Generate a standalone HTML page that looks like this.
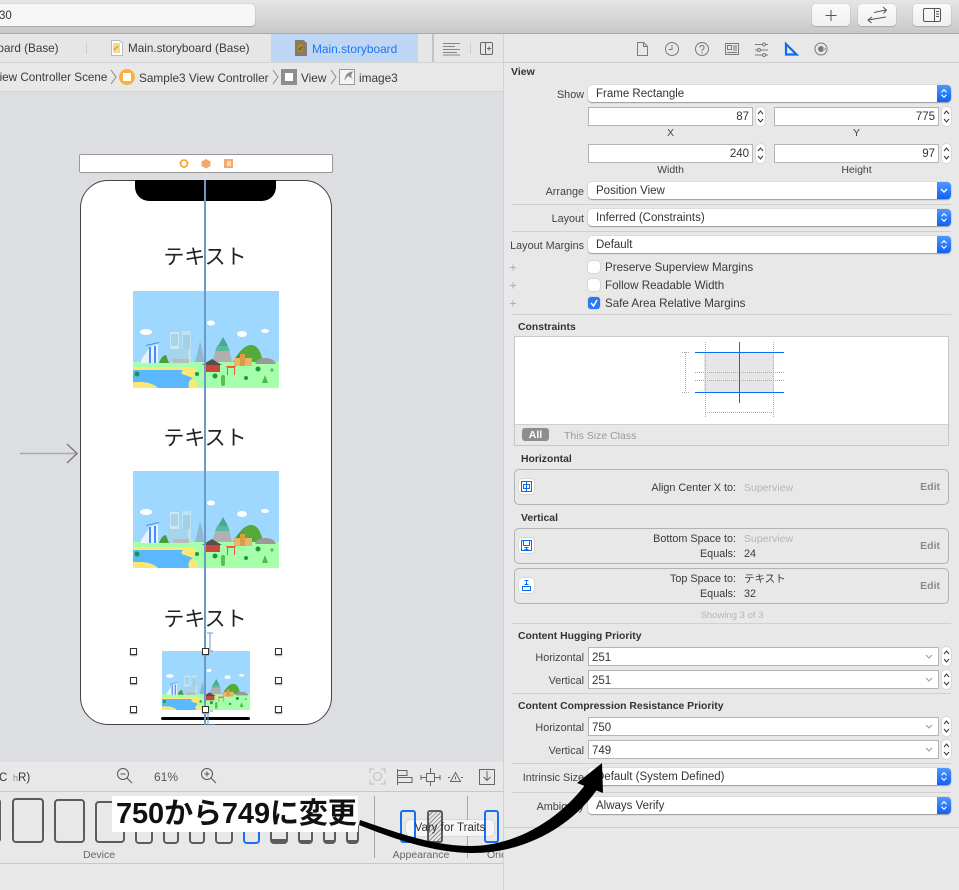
<!DOCTYPE html>
<html><head><meta charset="utf-8">
<style>
html,body{margin:0;padding:0;width:959px;height:890px;overflow:hidden;background:#e8e8e8}
body{position:relative;font-family:"Liberation Sans","Noto Sans CJK JP",sans-serif;font-size:11px;color:#3a3a3a}
.a{position:absolute}
.t{position:absolute;height:14px;line-height:16px;white-space:nowrap}
.r{text-align:right}
.c{text-align:center}
.b{font-weight:bold}
.l{position:absolute;height:1px;background:#d0d0d0;left:512px;width:439px}
.lab{position:absolute;left:484px;width:100px;text-align:right;height:14px;line-height:16px;font-size:10.8px;color:#444;white-space:nowrap}
.pop{position:absolute;left:588px;width:363px;background:#fff;border-radius:4px;box-shadow:0 1px 1px #999,0 0 1px #999;height:17px;line-height:19px;font-size:11.5px;color:#333;text-indent:8px}
.pop i{position:absolute;right:0;top:0;width:14px;height:17px;border-radius:0 4px 4px 0;background:linear-gradient(#4f97ff,#0f62f0)}
.pop svg{position:absolute;right:2px;top:3px}
.fld{position:absolute;background:#fff;border:1px solid #b4b4b4;box-sizing:border-box;height:19px;line-height:19px;font-size:11.5px;color:#333;text-align:right;padding-right:3px}
.st{position:absolute;width:9px;height:19px;background:#fff;border-radius:4px;box-shadow:0 0 1px #888}
.pf{position:absolute;left:588px;width:351px;height:19px;background:#fff;border:1px solid #b4b4b4;box-sizing:border-box;line-height:20px;font-size:11.5px;color:#333;padding-left:3px}
.pf svg{position:absolute;right:5px;top:6px}
.cb{position:absolute;left:588px;width:12px;height:12px;background:#fff;border-radius:3px;box-shadow:0 0 1px #777;}
.box{position:absolute;left:514px;width:435px;border:1px solid #b2b2b2;box-sizing:border-box;border-radius:5px;background:#e8e8e8}
.ed{position:absolute;left:910px;width:30px;text-align:right;height:14px;line-height:16px;font-weight:bold;font-size:10.5px;color:#8a8a8a}
.ic{position:absolute;left:519px;width:15px;height:15px;background:#fff;border-radius:3px;box-shadow:0 0 1px #777}
.btn{position:absolute;top:4px;height:22px;background:linear-gradient(#fafafa,#f0f0f0);border-radius:4px;box-shadow:0 1px 1px #aaa,0 0 1px #aaa}
.h{position:absolute;width:5px;height:5px;background:#fff;border:1px solid #333;box-shadow:0 1px 1px #999}
.jp{position:absolute;left:80px;width:252px;text-align:center;font-size:21px;height:32px;line-height:32px;color:#222}
.dev{position:absolute;border:2.5px solid #5c5c5c;box-sizing:border-box;border-radius:4px}
.dv2{position:absolute;top:825px;height:19px;border:2px solid #5c5c5c;border-radius:0 0 4px 4px;box-sizing:border-box;border-top:0}
</style></head><body>
<svg width="0" height="0" style="position:absolute">
<defs>
<symbol id="city" viewBox="0 0 146 97" preserveAspectRatio="none">
<rect width="146" height="97" fill="#9fd8ff"/>
<rect y="71" width="146" height="26" fill="#a6ffaa"/>
<path d="M0 76H58q8 2 4 8t-2 5q6 1 5 8H0Z" fill="#fbe774"/>
<path d="M0 79H50q-4 4 2 5l8 3q-6 3-4 10H25q-5-5-15-6H0Z" fill="#5ab8ff"/>
<ellipse cx="13" cy="41" rx="6" ry="3" fill="#fff"/><ellipse cx="78" cy="32" rx="4" ry="2.500" fill="#fff"/><ellipse cx="109" cy="43" rx="5" ry="3" fill="#fff"/><ellipse cx="132" cy="40" rx="4" ry="2" fill="#fff"/>
<path d="M8 69l9-13 8-3v19H8Z" fill="#e8f2ff"/><path d="M16 56h2v16h-2zM21 55h2v17h-2z" fill="#4a8cf0"/><path d="M13 54l13-3v1l-13 3z" fill="#4a8cf0"/>
<rect x="37" y="41" width="9" height="31" fill="#cfe6f3"/><rect x="49" y="40" width="9" height="31" fill="#bfe3ee"/><rect x="38" y="43" width="7" height="12" fill="#a6d4ea"/><rect x="50" y="44" width="7" height="14" fill="#9fd2e6"/>
<rect x="35" y="58" width="20" height="14" fill="#a6d4ea"/><rect x="40" y="68" width="16" height="4" fill="#bbb"/>
<path d="M26 72q3-8 7-8l3 8Z" fill="#4a9e3a"/>
<path d="M62 71q3-11 5-21q3 10 4 21Z" fill="#8fb8d0"/>
<path d="M79 71l5-16h11l4 16Z" fill="#b0b0b0"/><path d="M82 60h15l-3-6h-9Z" fill="#58b8a0"/><path d="M85 55l5-9 5 9Z" fill="#4aa890"/>
<path d="M100 71q10-18 19-17q8 1 11 17Z" fill="#55a83a"/><path d="M100 71q5-9 8-9l6 9Z" fill="#3e9a3a"/>
<rect x="101" y="67" width="18" height="8" fill="#e8b46a"/><rect x="107" y="63" width="5" height="12" fill="#d99d4a"/>
<path d="M122 73q2-6 10-6q9 0 11 6Z" fill="#9a9a9a"/>
<rect x="72" y="73" width="15" height="8" fill="#c8483a"/><path d="M69 74l10-6 10 6Z" fill="#55504e"/>
<path d="M93 75h10v1h-1v8h-1v-7h-6v7h-1v-8h-1Z" fill="#e8603a"/>
<circle cx="4" cy="83" r="2.500" fill="#1a9a3a"/><circle cx="64" cy="83" r="2" fill="#1a9a3a"/><circle cx="82" cy="85" r="2.500" fill="#1a9a3a"/><rect x="88" y="84" width="4" height="11" rx="2" fill="#5cc04a"/><circle cx="113" cy="87" r="2" fill="#1a9a3a"/><circle cx="125" cy="78" r="2.500" fill="#1a9a3a"/><path d="M129 92l3-8 3 8Z" fill="#4cb84a"/><circle cx="139" cy="79" r="1.600" fill="#5cc04a"/>
</symbol>
<symbol id="ud" viewBox="0 0 12 13"><path d="M3 5l3-3 3 3M3 8l3 3 3-3" fill="none" stroke="#fff" stroke-width="1.400"/></symbol>
<symbol id="udk" viewBox="0 0 9 19"><path d="M2 7l2.500-3 2.500 3M2 12l2.500 3 2.500-3" fill="none" stroke="#333" stroke-width="1"/></symbol>
<symbol id="chev" viewBox="0 0 8 5"><path d="M1 1l3 3 3-3" fill="none" stroke="#999" stroke-width="1"/></symbol>
</defs>
</svg>

<!-- toolbar -->
<div class="a" style="left:0;top:0;width:959px;height:33px;background:linear-gradient(#e6e6e6,#c8c8c8)"></div>
<div class="a" style="left:0;top:33px;width:959px;height:1px;background:#a9a9a9"></div>
<div class="a" style="left:-10px;top:4px;width:265px;height:22px;background:#f6f6f6;border-radius:4px;box-shadow:0 1px 1px #aaa,0 0 1px #aaa"></div>
<div class="t" style="left:-1px;top:8px;font-size:11.5px;color:#333">30</div>
<div class="btn" style="left:812px;width:38px"></div>
<div class="btn" style="left:858px;width:38px"></div>
<div class="btn" style="left:913px;width:38px"></div>
<svg class="a" style="left:812px;top:4px" width="139" height="22" fill="none" stroke="#555" stroke-width="1">
<path d="M19 6v11M13.500 11.500h11"/>
<path d="M62 8.500l12-2.500M71 3l3.500 3-3 3.500"/><path d="M74 13l-18 3M60 13l-4 3 3.500 3"/>
<rect x="111.500" y="4.500" width="17" height="13" rx="1.500"/><path d="M122.500 4.500v13M124 7.500h3M124 10h3M124 12.500h3"/>
</svg>

<!-- tabs -->
<div class="a" style="left:0;top:34px;width:503px;height:28px;background:#e6e6e6"></div>
<div class="a" style="left:271px;top:34px;width:147px;height:28px;background:#bfd7f5"></div>
<div class="a" style="left:86px;top:43px;width:1px;height:11px;background:#ccc"></div>
<div class="a" style="left:432px;top:34px;width:2px;height:28px;background:#c4c4c4"></div>
<div class="t" style="left:-9px;top:41px;font-size:11.7px;color:#3a3a3a">board (Base)</div>
<div class="t" style="left:128px;top:41px;font-size:11.7px;color:#3a3a3a">Main.storyboard (Base)</div>
<div class="t" style="left:312px;top:41px;font-size:11.9px;color:#1d76f2">Main.storyboard</div>
<svg class="a" style="left:111px;top:40px" width="12" height="16"><path d="M.5.500h8l3 3v12H.500Z" fill="#fff" stroke="#bbb"/><rect x="2" y="3" width="7" height="10" fill="#f7d98a"/><path d="M3 10l4-4" stroke="#d08a20"/></svg>
<svg class="a" style="left:295px;top:40px" width="12" height="16"><path d="M.5.500h8l3 3v12H.500Z" fill="#8d7a5c" stroke="#7a7a80"/><path d="M3 4h5v8H3z" fill="#a8843c"/><path d="M4 10l3-3" stroke="#5c4a22"/></svg>
<svg class="a" style="left:442px;top:41px" width="60" height="15" fill="none" stroke="#666" stroke-width="1">
<path d="M1 2.500h17M1 5.500h12M1 8.500h17M1 11.500h14M1 14h17" stroke-width=".8"/>
<path d="M28.500 2v11" stroke="#ccc"/>
<rect x="38.500" y="1.500" width="12" height="12" rx="1.500"/><path d="M43.500 1.500v12M45 7.500h4M47 5.500v4"/>
</svg>

<!-- breadcrumb -->
<div class="a" style="left:0;top:62px;width:503px;height:1px;background:#d4d4d4"></div>
<div class="a" style="left:0;top:63px;width:503px;height:28px;background:#e8e8e8"></div>
<div class="a" style="left:0;top:91px;width:503px;height:1px;background:#d4d4d4"></div>
<div class="t" style="left:-8px;top:70px;font-size:11.7px;color:#3a3a3a">View Controller Scene</div>
<div class="t" style="left:139px;top:70px;font-size:11.8px;color:#3a3a3a">Sample3 View Controller</div>
<div class="t" style="left:301px;top:70px;font-size:11.8px;color:#3a3a3a">View</div>
<div class="t" style="left:359px;top:70px;font-size:11.8px;color:#3a3a3a">image3</div>
<svg class="a" style="left:108px;top:67px" width="290" height="20" fill="none">
<path d="M3 3l5 7-5 7M165 3l5 7-5 7M223 3l5 7-5 7" stroke="#888"/>
<circle cx="19" cy="10" r="8" fill="#fbb03b"/><rect x="15" y="6" width="8" height="8" fill="#fff"/>
<rect x="173" y="2" width="16" height="16" fill="#8e8e8e"/><rect x="177" y="6" width="8" height="8" fill="#fff"/>
<rect x="231.500" y="2.500" width="15" height="15" fill="#f4f4f4" stroke="#999"/><path d="M240 6l5-2-2 5 2 3-5-3-4 5 2-6Z" fill="#8e8e8e"/>
</svg>

<!-- canvas -->
<div class="a" style="left:0;top:92px;width:503px;height:670px;background:#dddee2"></div>
<div class="a" style="left:79px;top:154px;width:254px;height:19px;background:#fff;border:1px solid #999;box-sizing:border-box;border-radius:2px"></div>
<svg class="a" style="left:178px;top:158px" width="60" height="12">
<circle cx="6" cy="5.500" r="3.500" fill="#fff" stroke="#fbb03b" stroke-width="2"/>
<path d="M28 1l4.500 2.500v4.500l-4.500 2.500-4.500-2.500v-4.500Z" fill="#f6a868"/>
<rect x="46" y="1" width="9" height="9" fill="#f6a868"/><rect x="49" y="3" width="4" height="5" fill="#fff" opacity=".6"/>
</svg>
<div class="a" style="left:80px;top:180px;width:252px;height:545px;background:#fff;border:1px solid #444;box-sizing:border-box;border-radius:28px"></div>
<div class="a" style="left:135px;top:180px;width:141px;height:21px;background:#000;border-radius:0 0 14px 14px"></div>

<div class="jp" style="top:242px;left:79px">テキスト</div>
<svg class="a" style="left:133px;top:291px" width="146" height="97"><use href="#city" width="146" height="97"/></svg>
<div class="jp" style="top:423px;left:79px">テキスト</div>
<svg class="a" style="left:133px;top:471px" width="146" height="97"><use href="#city" width="146" height="97"/></svg>
<div class="jp" style="top:604px;left:79px">テキスト</div>
<svg class="a" style="left:162px;top:651px" width="88" height="59"><use href="#city" width="88" height="59"/></svg>
<div class="a" style="left:161px;top:717px;width:89px;height:3px;background:#000;border-radius:2px"></div>
<div class="a" style="left:204px;top:180px;width:2px;height:545px;background:#6b9ac8"></div>
<svg class="a" style="left:200px;top:630px" width="20" height="95" fill="none" stroke="#6b9ac8" stroke-width="1">
<path d="M7 3h6M10 3v17M7 21h6"/><path d="M8 78v17M10 81h3M7 95h8"/>
</svg>
<div class="h" style="left:130px;top:648px"></div><div class="h" style="left:202px;top:648px"></div><div class="h" style="left:275px;top:648px"></div>
<div class="h" style="left:130px;top:677px"></div><div class="h" style="left:275px;top:677px"></div>
<div class="h" style="left:130px;top:706px"></div><div class="h" style="left:202px;top:706px"></div><div class="h" style="left:275px;top:706px"></div>
<svg class="a" style="left:18px;top:442px" width="62" height="22" fill="none"><path d="M2 11.500h58" stroke="#aaa" stroke-width="1.500"/><path d="M49 2l10 9.500-10 9.500" stroke="#777" stroke-width="1.300"/></svg>

<!-- bottom bar -->
<div class="a" style="left:0;top:762px;width:503px;height:128px;background:#e8e8e8"></div>
<div class="a" style="left:0;top:791px;width:503px;height:1px;background:#c8c8c8"></div>
<div class="a" style="left:0;top:863px;width:503px;height:1px;background:#c8c8c8"></div>
<div class="t" style="left:-1px;top:770px;font-size:11.5px;color:#333">C <span style="color:#888;font-size:9px">&nbsp;h</span>R)</div>
<div class="t" style="left:154px;top:769px;font-size:12px;color:#555">61%</div>
<svg class="a" style="left:116px;top:767px" width="102" height="18" fill="none" stroke="#555">
<circle cx="7" cy="7" r="5.500"/><path d="M11 11l5 5M4.500 7h5"/>
<circle cx="91" cy="7" r="5.500"/><path d="M95 11l5 5M88.500 7h5M91 4.500v5"/>
</svg>
<svg class="a" style="left:368px;top:767px" width="128" height="20" fill="none" stroke="#666">
<path d="M2 6V2h4M13 2h4v4M17 13v4h-4M6 17H2v-4" stroke="#bbb"/><circle cx="9.500" cy="9.500" r="4" stroke="#bbb"/>
<path d="M29.500 2v16M30 3.500h9v5h-9M30 10.500h14v5H30"/>
<rect x="58.500" y="6.500" width="8" height="8"/><path d="M62.500 1v5M62.500 15v4M53 8v5M53 10.500h5M67 10.500h5M72 8v5"/>
<path d="M82.500 14.500l5-9 5 9ZM80 10.500h2M93 10.500h2M87.500 9.500v3"/>
<rect x="111.500" y="2.500" width="15" height="15"/><path d="M119 4v9M115.500 10l3.500 3.500 3.500-3.500"/>
</svg>

<!-- devices -->
<div class="dev" style="left:-18px;top:798px;width:19px;height:45px"></div>
<div class="dev" style="left:12px;top:798px;width:32px;height:45px"></div>
<div class="dev" style="left:54px;top:799px;width:31px;height:44px"></div>
<div class="dev" style="left:95px;top:801px;width:30px;height:42px"></div>
<div class="dv2" style="left:135px;width:18px"></div>
<div class="dv2" style="left:163px;width:16px"></div>
<div class="dv2" style="left:189px;width:16px"></div>
<div class="dv2" style="left:215px;width:18px"></div>
<div class="dv2" style="left:243px;width:17px;border-color:#1a6ff0"></div>
<div class="dv2" style="left:270px;width:18px;border-bottom-width:5px"></div>
<div class="dv2" style="left:298px;width:15px;border-bottom-width:4px"></div>
<div class="dv2" style="left:323px;width:13px;border-bottom-width:4px"></div>
<div class="dv2" style="left:346px;width:13px;border-bottom-width:4px"></div>
<div class="t c" style="left:70px;top:847px;width:58px;font-size:10.5px;color:#666">Device</div>
<div class="t c" style="left:380px;top:847px;width:82px;font-size:10.5px;color:#666">Appearance</div>
<div class="t" style="left:487px;top:847px;font-size:10.5px;color:#666;width:16px;overflow:hidden">Orientation</div>
<div class="a" style="left:374px;top:796px;width:1px;height:62px;background:#a8a8a8"></div>
<div class="a" style="left:467px;top:796px;width:1px;height:62px;background:#a8a8a8"></div>
<div class="a" style="left:406px;top:820px;width:88px;height:16px;background:#f6f6f6;border-radius:4px;box-shadow:0 0 1px #888"></div>
<div class="a" style="left:400px;top:810px;width:16px;height:33px;border:2px solid #1a6ff0;box-sizing:border-box;border-radius:3px"></div>
<div class="a" style="left:427px;top:810px;width:16px;height:33px;border:2px solid #5c5c5c;box-sizing:border-box;border-radius:3px;background:repeating-linear-gradient(135deg,#e8e8e8 0 2px,#8a8a8a 2px 3px)"></div>
<div class="a" style="left:484px;top:810px;width:15px;height:33px;border:2px solid #1a6ff0;box-sizing:border-box;border-radius:3px"></div>
<div class="t c" style="left:406px;top:820px;width:88px;font-size:11.5px;color:#333">Vary for Traits</div>

<!-- inspector -->
<div class="a" style="left:503px;top:34px;width:1px;height:856px;background:#d0d0d0"></div>
<div class="a" style="left:504px;top:34px;width:455px;height:856px;background:#e8e8e8"></div>
<div class="a" style="left:504px;top:62px;width:455px;height:1px;background:#d0d0d0"></div>
<svg class="a" style="left:630px;top:38px" width="200" height="24" fill="none" stroke="#7a7a7a" stroke-width="1">
<path d="M7.500 4.500h6l4 4v9h-10ZM13.500 4.500v4h4"/>
<circle cx="42" cy="11" r="6.500"/><path d="M42 7v4.500h-3.500"/>
<circle cx="72" cy="11" r="6.500"/><path d="M70 9.500q0-2 2-2t2 2q0 1.500-2 2.500v1M72 14v1.500"/>
<rect x="95.500" y="5.500" width="13" height="11"/><rect x="97.500" y="7.500" width="4" height="4"/><path d="M103 8h4M103 10h4M103 12h4M97 14.500h10"/>
<path d="M125 6.500h13M125 12h13M125 17h13"/><circle cx="134" cy="6.500" r="1.500" fill="#e8e8e8"/><circle cx="129" cy="12" r="1.500" fill="#e8e8e8"/><circle cx="134" cy="17" r="1.500" fill="#e8e8e8"/>
<path d="M156 6v10.500h10.500Z" stroke="#0a6cf5" stroke-width="2.200"/>
<circle cx="191" cy="11" r="6"/><circle cx="191" cy="11" r="2.500" fill="#7a7a7a"/><path d="M193 11h6" stroke="#e8e8e8" stroke-width="2"/><path d="M192 11h6"/>
</svg>

<div class="t b" style="left:511px;top:64px;font-size:10.500px;color:#333">View</div>
<div class="lab" style="top:87px">Show</div>
<div class="pop" style="top:85px">Frame Rectangle<i><svg width="10" height="11"><use href="#ud" width="10" height="11"/></svg></i></div>

<div class="fld" style="left:588px;top:107px;width:165px">87</div><div class="st" style="left:756px;top:107px"><svg width="9" height="19"><use href="#udk"/></svg></div>
<div class="fld" style="left:774px;top:107px;width:165px">775</div><div class="st" style="left:942px;top:107px"><svg width="9" height="19"><use href="#udk"/></svg></div>
<div class="t c" style="left:588px;top:125px;width:165px;font-size:10.5px;color:#444">X</div>
<div class="t c" style="left:774px;top:125px;width:165px;font-size:10.5px;color:#444">Y</div>
<div class="fld" style="left:588px;top:144px;width:165px">240</div><div class="st" style="left:756px;top:144px"><svg width="9" height="19"><use href="#udk"/></svg></div>
<div class="fld" style="left:774px;top:144px;width:165px">97</div><div class="st" style="left:942px;top:144px"><svg width="9" height="19"><use href="#udk"/></svg></div>
<div class="t c" style="left:588px;top:162px;width:165px;font-size:10.5px;color:#444">Width</div>
<div class="t c" style="left:774px;top:162px;width:165px;font-size:10.5px;color:#444">Height</div>

<div class="lab" style="top:184px">Arrange</div>
<div class="pop" style="top:182px">Position View<i><svg width="10" height="11"><path d="M2 4l3 3 3-3" fill="none" stroke="#fff" stroke-width="1.400"/></svg></i></div>
<div class="l" style="top:204px"></div>
<div class="lab" style="top:211px">Layout</div>
<div class="pop" style="top:209px">Inferred (Constraints)<i><svg width="10" height="11"><use href="#ud" width="10" height="11"/></svg></i></div>
<div class="l" style="top:231px"></div>
<div class="lab" style="top:238px">Layout Margins</div>
<div class="pop" style="top:236px">Default<i><svg width="10" height="11"><use href="#ud" width="10" height="11"/></svg></i></div>

<svg class="a" style="left:509px;top:261px" width="10" height="48" stroke="#b0b0b0"><path d="M1 6.500h6M4 3.500v6M1 24.500h6M4 21.500v6M1 42.500h6M4 39.500v6"/></svg>
<div class="cb" style="top:261px"></div><div class="t" style="left:605px;top:260px;font-size:11.6px">Preserve Superview Margins</div>
<div class="cb" style="top:279px"></div><div class="t" style="left:605px;top:278px;font-size:11.6px">Follow Readable Width</div>
<div class="cb" style="top:297px;background:#2a7af5"><svg width="12" height="12"><path d="M3 6l2.500 3L9 3" fill="none" stroke="#fff" stroke-width="1.500"/></svg></div><div class="t" style="left:605px;top:296px;font-size:11.6px">Safe Area Relative Margins</div>
<div class="l" style="top:314px"></div>

<div class="t b" style="left:518px;top:320px;font-size:10.400px;color:#333">Constraints</div>
<div class="a" style="left:514px;top:336px;width:435px;height:110px;border:1px solid #c8c8c8;box-sizing:border-box;background:#e8e8e8"></div>
<div class="a" style="left:515px;top:337px;width:433px;height:87px;background:#fff;border-bottom:1px solid #d0d0d0"></div>
<svg class="a" style="left:678px;top:338px" width="112" height="82" fill="none" stroke-width="1">
<rect x="26" y="14" width="70" height="40" fill="#e6e6e6"/>
<g stroke="#aaa" stroke-dasharray="1 1">
<path d="M27.500 4v75M95.500 4v75M17 34.500h89M17 42.500h89M27 74.500h68M4 14.500h8M4 54.500h8M7.500 14v40"/>
</g>
<path d="M17 14.500h89M17 54.500h89M61.500 4v61" stroke="#0a6cf5"/>
</svg>
<div class="a" style="left:522px;top:428px;width:27px;height:13px;background:#8e8e8e;border-radius:3px;color:#fff;font-size:10.5px;font-weight:bold;line-height:15px;text-align:center">All</div>
<div class="t" style="left:564px;top:428px;font-size:10.5px;color:#999">This Size Class</div>

<div class="t b" style="left:521px;top:452px;font-size:10.400px;color:#333">Horizontal</div>
<div class="box" style="top:469px;height:36px"></div>
<div class="ic" style="top:479px"><svg width="15" height="15" fill="none" stroke="#0a6cf5"><rect x="2.500" y="2.500" width="10" height="10"/><rect x="4.500" y="5.500" width="6" height="4"/><path d="M7.500 2.500v10"/></svg></div>
<div class="t r" style="left:600px;top:480px;width:136px;font-size:10.8px">Align Center X to:</div>
<div class="t" style="left:744px;top:480px;font-size:10.5px;color:#b5b5b5">Superview</div>
<div class="ed" style="top:479px">Edit</div>

<div class="t b" style="left:521px;top:511px;font-size:10.400px;color:#333">Vertical</div>
<div class="box" style="top:528px;height:36px"></div>
<div class="ic" style="top:538px"><svg width="15" height="15" fill="none" stroke="#0a6cf5"><rect x="2.500" y="2.500" width="10" height="10"/><rect x="4.500" y="2.500" width="6" height="5"/><path d="M5.500 9.500h4M7.500 9.500v3M5.500 11.500h4"/></svg></div>
<div class="t r" style="left:600px;top:531px;width:136px;font-size:10.8px">Bottom Space to:</div>
<div class="t" style="left:744px;top:531px;font-size:10.5px;color:#b5b5b5">Superview</div>
<div class="t r" style="left:600px;top:546px;width:136px;font-size:10.8px">Equals:</div>
<div class="t" style="left:744px;top:546px;font-size:10.8px">24</div>
<div class="ed" style="top:538px">Edit</div>

<div class="box" style="top:568px;height:36px"></div>
<div class="ic" style="top:578px"><svg width="15" height="15" fill="none" stroke="#0a6cf5"><path d="M5.500 2.500h4M7.500 2.500v4M5.500 6.500h4"/><rect x="3.500" y="8.500" width="8" height="4"/></svg></div>
<div class="t r" style="left:600px;top:571px;width:136px;font-size:10.8px">Top Space to:</div>
<div class="t" style="left:744px;top:571px;font-size:10.5px">テキスト</div>
<div class="t r" style="left:600px;top:586px;width:136px;font-size:10.8px">Equals:</div>
<div class="t" style="left:744px;top:586px;font-size:10.8px">32</div>
<div class="ed" style="top:578px">Edit</div>
<div class="t c" style="left:660px;top:608px;width:144px;font-size:9.5px;color:#b5b5b5">Showing 3 of 3</div>
<div class="l" style="top:623px"></div>

<div class="t b" style="left:518px;top:629px;font-size:10.400px;color:#333">Content Hugging Priority</div>
<div class="lab" style="top:650px">Horizontal</div>
<div class="pf" style="top:647px">251<svg width="8" height="5"><use href="#chev"/></svg></div><div class="st" style="left:942px;top:647px"><svg width="9" height="19"><use href="#udk"/></svg></div>
<div class="lab" style="top:673px">Vertical</div>
<div class="pf" style="top:670px">251<svg width="8" height="5"><use href="#chev"/></svg></div><div class="st" style="left:942px;top:670px"><svg width="9" height="19"><use href="#udk"/></svg></div>
<div class="l" style="top:693px"></div>

<div class="t b" style="left:518px;top:699px;font-size:10.400px;color:#333">Content Compression Resistance Priority</div>
<div class="lab" style="top:720px">Horizontal</div>
<div class="pf" style="top:717px">750<svg width="8" height="5"><use href="#chev"/></svg></div><div class="st" style="left:942px;top:717px"><svg width="9" height="19"><use href="#udk"/></svg></div>
<div class="lab" style="top:743px">Vertical</div>
<div class="pf" style="top:740px">749<svg width="8" height="5"><use href="#chev"/></svg></div><div class="st" style="left:942px;top:740px"><svg width="9" height="19"><use href="#udk"/></svg></div>
<div class="l" style="top:763px"></div>

<div class="lab" style="top:770px">Intrinsic Size</div>
<div class="pop" style="top:768px">Default (System Defined)<i><svg width="10" height="11"><use href="#ud" width="10" height="11"/></svg></i></div>
<div class="l" style="top:792px"></div>
<div class="lab" style="top:799px">Ambiguity</div>
<div class="pop" style="top:797px">Always Verify<i><svg width="10" height="11"><use href="#ud" width="10" height="11"/></svg></i></div>
<div class="a" style="left:504px;top:827px;width:455px;height:1px;background:#d0d0d0"></div>

<!-- annotation -->
<div class="a" style="left:112px;top:796px;width:246px;height:36px;background:#fff"></div>
<div class="t b" style="left:116px;top:798px;height:33px;line-height:33px;font-size:29px;color:#111;letter-spacing:-.1px">750から749に変更</div>
<svg class="a" style="left:0;top:0;pointer-events:none" width="959" height="890">
<path d="M360 820C390 830 430 846 470 846C520 846 565 815 590 778L600 785C575 825 525 854 470 853C430 852 392 838 359 825Z" fill="#000"/>
<path d="M602 763L577 783L603 793Z" fill="#000"/>
</svg>
</body></html>
